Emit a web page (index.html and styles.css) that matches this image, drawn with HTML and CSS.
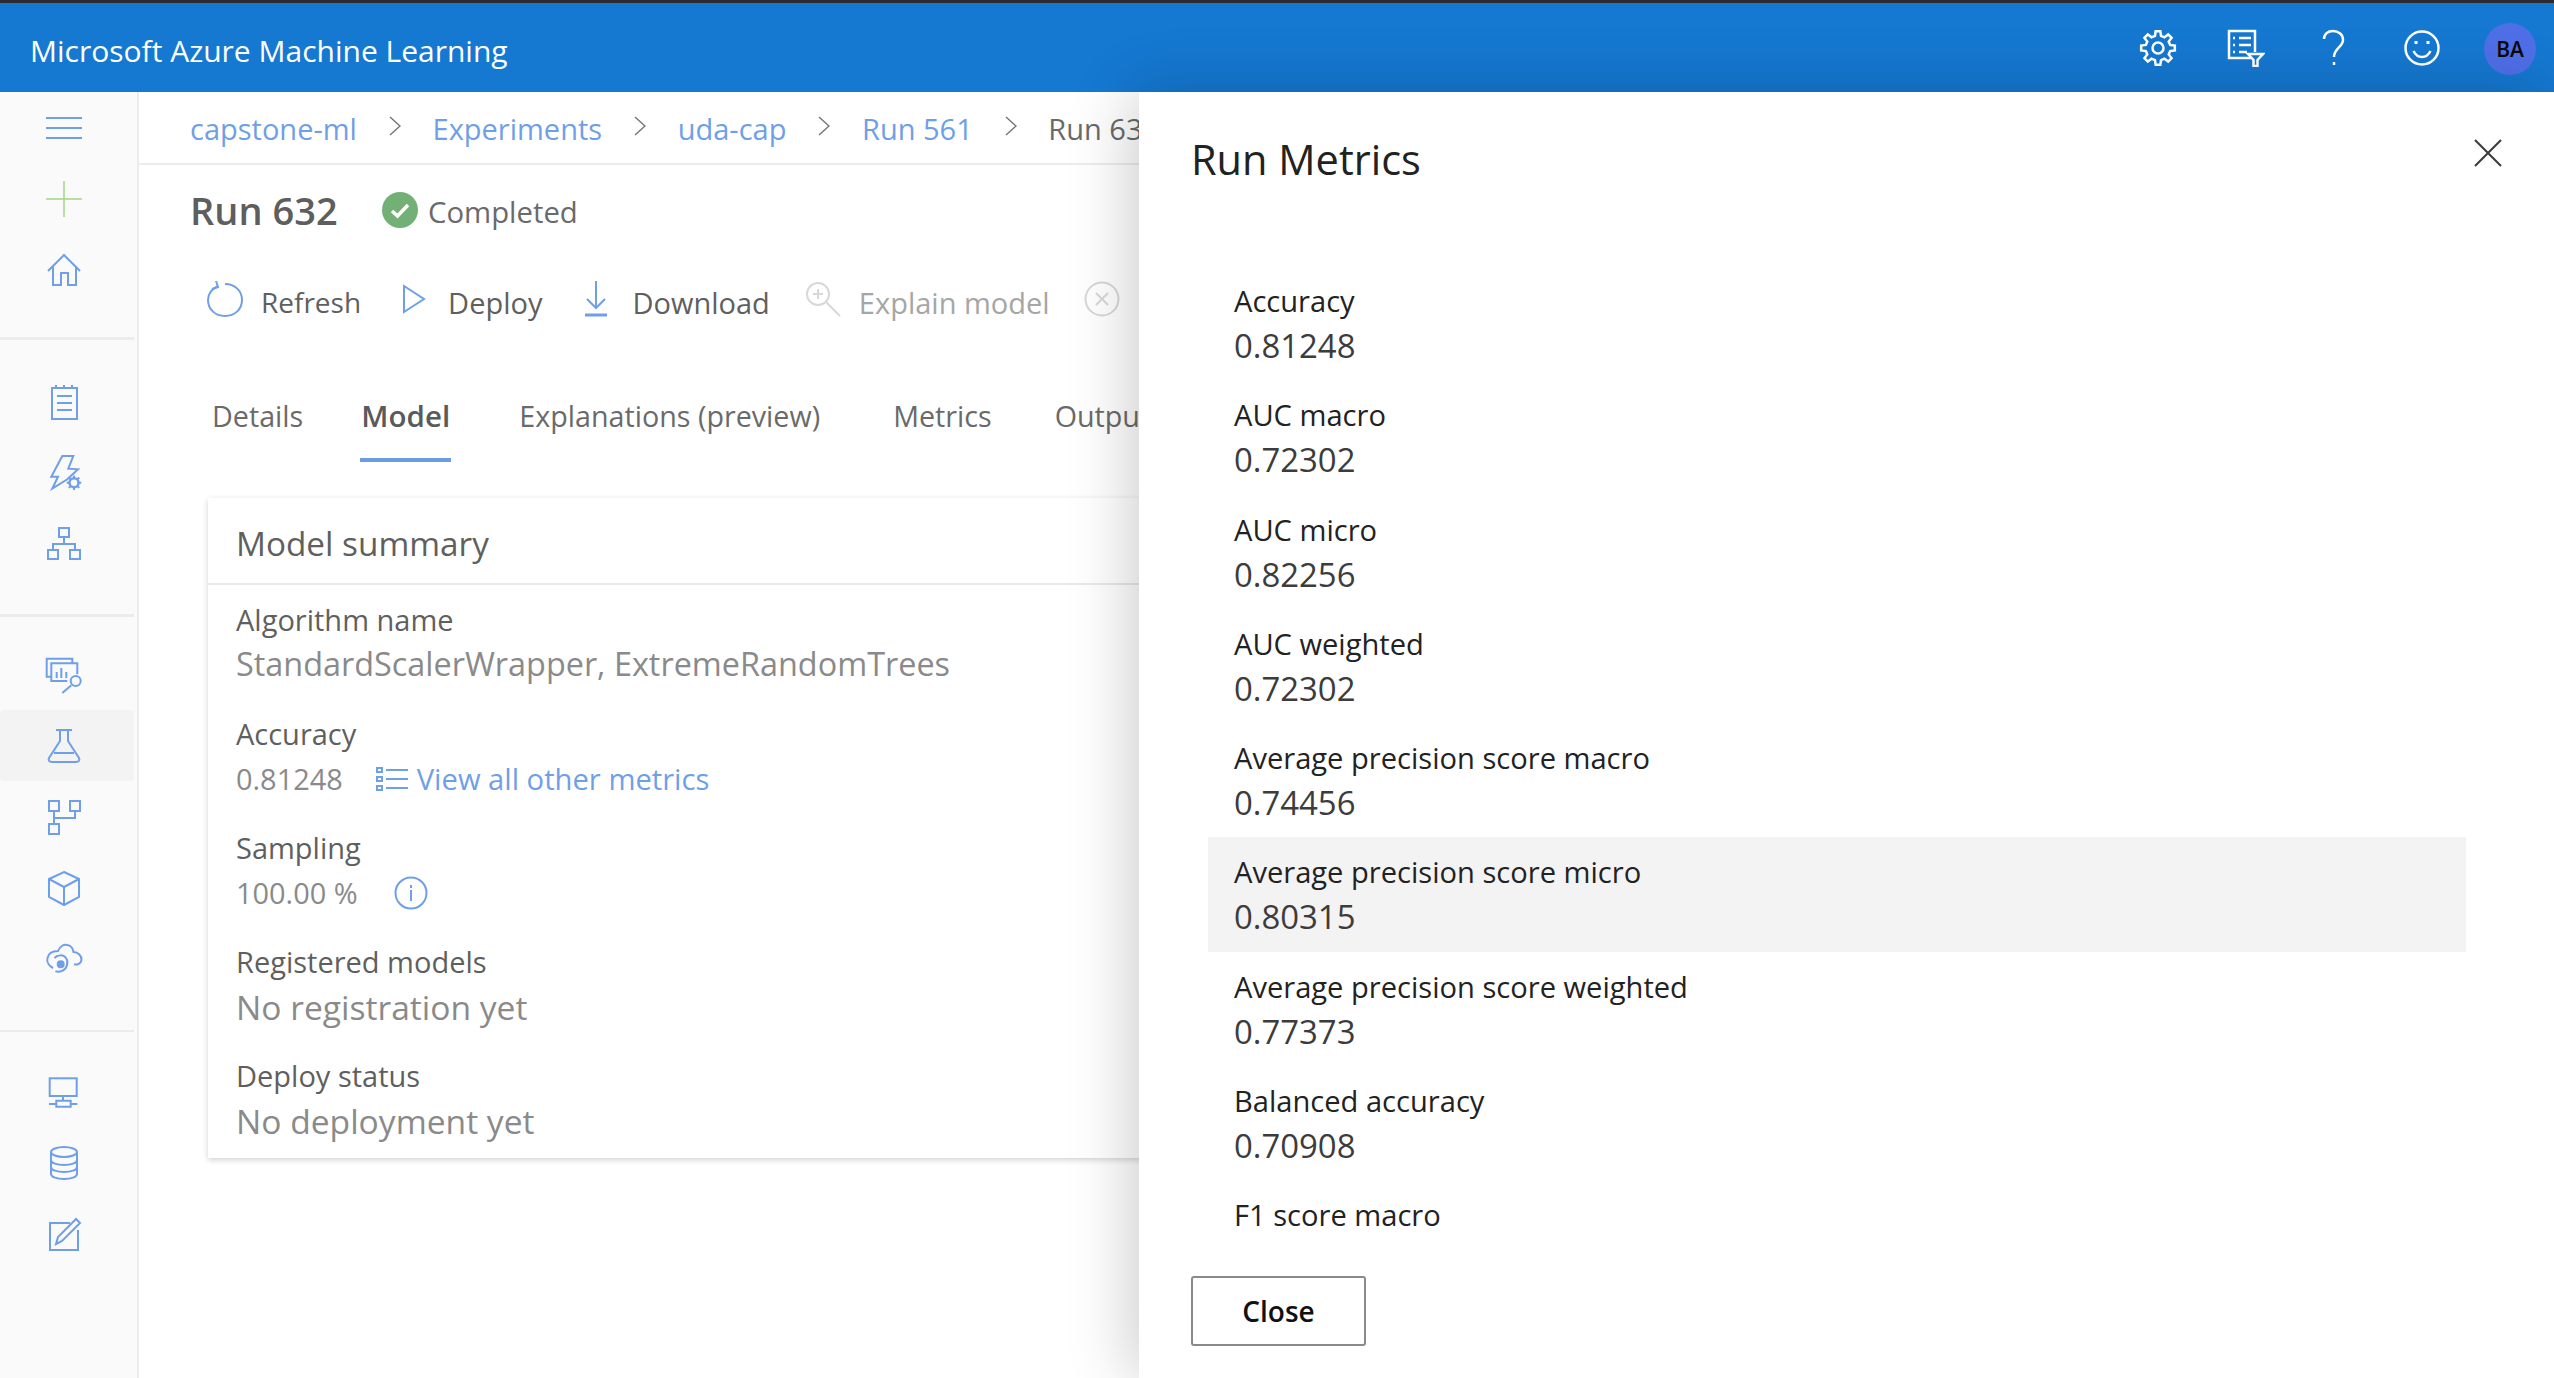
FILE: index.html
```html
<!DOCTYPE html>
<html lang="en">
<head>
<meta charset="utf-8">
<title>Run 632 - Microsoft Azure Machine Learning</title>
<link rel="stylesheet" href="styles.css">
</head>
<body>
<header class="topbar">
  <div class="brand">Microsoft Azure Machine Learning</div>
  <div class="top-actions">
    <span class="top-slot"><svg class="top-icon" width="38" height="38" viewBox="-19 -19 38 38"><polygon points="12.13,-3.02 16.83,-2.37 16.83,2.37 12.13,3.02 10.71,6.44 13.58,10.23 10.23,13.58 6.44,10.71 3.02,12.13 2.37,16.83 -2.37,16.83 -3.02,12.13 -6.44,10.71 -10.23,13.58 -13.58,10.23 -10.71,6.44 -12.13,3.02 -16.83,2.37 -16.83,-2.37 -12.13,-3.02 -10.71,-6.44 -13.58,-10.23 -10.23,-13.58 -6.44,-10.71 -3.02,-12.13 -2.37,-16.83 2.37,-16.83 3.02,-12.13 6.44,-10.71 10.23,-13.58 13.58,-10.23 10.71,-6.44"/><circle r="5.5"/></svg></span>
    <span class="top-slot"><svg class="top-icon" width="38" height="38" viewBox="0 0 38 38"><path d="M25 29H2V2h26v21"/><path d="M6 9h2M6 16h2M6 23h2M12 9h12M12 16h12M12 23h8"/><path d="M21 25h15l-5.500 6v6h-4v-6z"/></svg></span>
    <span class="top-slot"><svg class="top-icon" width="38" height="38" viewBox="0 0 38 38"><path d="M9 10c0-5 4-8 9-8s10 3 10 9c0 7-9 8-9 17"/><path d="M19 33v3"/></svg></span>
    <span class="top-slot"><svg class="top-icon" width="38" height="38" viewBox="0 0 38 38"><circle cx="19" cy="19" r="16.500"/><path d="M10.500 22c2 4 5 6 8.500 6s6.500-2 8.500-6"/><path d="M13 12v3M25 12v3" stroke-width="3"/></svg></span>
    <span class="top-slot"><span class="avatar">BA</span></span>
  </div>
</header>

<div class="shell">
  <nav class="sidebar">
    <div class="nav-group nav-group-first">
      <div class="nav-row"><svg class="nav-icon" viewBox="0 0 36 36"><path d="M0 8h36M0 18h36M0 28h36"/></svg></div>
      <div class="nav-row"><svg class="nav-icon nav-plus" viewBox="0 0 36 36"><path d="M0 18h36M18 0v36"/></svg></div>
      <div class="nav-row"><svg class="nav-icon" viewBox="0 0 36 36"><path d="M2 19 18 3l16 16"/><path d="M7 15v18h8V21h7v12h8V15"/></svg></div>
    </div>
    <div class="nav-group">
      <div class="nav-row"><svg class="nav-icon" viewBox="0 0 36 36"><rect x="6" y="4" width="25" height="31"/><path d="M10 1v3M18 1v3M26 1v3M11 12h15M11 19h15M11 26h15"/></svg></div>
      <div class="nav-row"><svg class="nav-icon" viewBox="0 0 36 36"><path d="M16.300 1h11l-5 12.700 9.700.6-10.700 10L6.300 33.700 12 21.700H5.300z"/><circle cx="28" cy="27.700" r="4.500" stroke-width="2.500"/><path d="M28 20.500v2.500M28 32.500v2.500M20.700 27.700h2.500M32.800 27.700h2.500M22.800 22.500l1.800 1.800M31.400 31.100l1.800 1.800M33.200 22.500l-1.800 1.800M24.600 31.100l-1.800 1.800"/></svg></div>
      <div class="nav-row"><svg class="nav-icon" viewBox="0 0 36 36"><rect x="13" y="2" width="10" height="9"/><rect x="2" y="24" width="10" height="9"/><rect x="24" y="24" width="10" height="9"/><path d="M18 11v7M7 24v-6h22v6"/></svg></div>
    </div>
    <div class="nav-group nav-group-wide">
      <div class="nav-row"><svg class="nav-icon" viewBox="0 0 36 36"><path d="M5.300 19.700H.7V1.700h25.600v4.600"/><path d="M21.300 24H5.300V6.300h26v11"/><path d="M10.700 21v-6M15.300 21V11M20.300 21v-6"/><circle cx="29.700" cy="24" r="5"/><path d="M25.300 28.300 16.300 36"/></svg></div>
      <div class="nav-row nav-row-active"><svg class="nav-icon" viewBox="0 0 36 36"><path d="M10 2h16M14 2v11L3 30c-1 2 0 4 3 4h24c3 0 4-2 3-4L22 13V2"/><path d="M8 25h20"/></svg></div>
      <div class="nav-row"><svg class="nav-icon" viewBox="0 0 36 36"><rect x="3" y="2" width="10" height="10"/><rect x="24" y="2" width="10" height="10"/><rect x="3" y="25" width="10" height="10"/><path d="M8 12v13M8 19h21v-7"/></svg></div>
      <div class="nav-row"><svg class="nav-icon" viewBox="0 0 36 36"><path d="M18 2 33 9v18l-15 8-15-8V9z"/><path d="M3 9l15 8 15-8M18 17v18"/></svg></div>
      <div class="nav-row"><svg class="nav-icon" viewBox="0 0 36 36"><path d="M7 27C3 25 .5 21 1.500 17 2.500 12 7 10 12 10 14 5 18 3 21 4c4 0 6 4 6.500 7 4.500 0 8.500 4 8 8-.5 3-3.500 5-7.500 4.500"/><path d="M8.500 17c2.500-3 8.500-4 11.500 0s1 11-4 13c-3 1-5 1-6.500 0"/><circle cx="14.700" cy="23.300" r="3" class="nav-dot"/></svg></div>
    </div>
    <div class="nav-group nav-group-last">
      <div class="nav-row"><svg class="nav-icon" viewBox="0 0 36 36"><rect x="3.700" y="4.300" width="27" height="17.700"/><path d="M17 22v4.700M10.300 26.700h14.400v6H10.300zM3 30h7.300M24.700 30h6.600"/></svg></div>
      <div class="nav-row"><svg class="nav-icon" viewBox="0 0 36 36"><ellipse cx="18" cy="7" rx="13" ry="5"/><path d="M5 7v22c0 3 6 5 13 5s13-2 13-5V7M5 15c0 3 6 5 13 5s13-2 13-5M5 22c0 3 6 5 13 5s13-2 13-5"/></svg></div>
      <div class="nav-row"><svg class="nav-icon" viewBox="0 0 36 36"><path d="M24 7H4v27h28V14"/><path d="M10 28l2-7L30 3l4 4-18 18z"/></svg></div>
    </div>
  </nav>

  <main class="main">
    <div class="crumbs">
      <a class="crumb-link">capstone-ml</a>
      <svg class="chev" viewBox="0 0 12 20"><path d="M1 1l10 9-10 9"/></svg>
      <a class="crumb-link">Experiments</a>
      <svg class="chev" viewBox="0 0 12 20"><path d="M1 1l10 9-10 9"/></svg>
      <a class="crumb-link">uda-cap</a>
      <svg class="chev" viewBox="0 0 12 20"><path d="M1 1l10 9-10 9"/></svg>
      <a class="crumb-link">Run 561</a>
      <svg class="chev" viewBox="0 0 12 20"><path d="M1 1l10 9-10 9"/></svg>
      <span class="crumb-current">Run 632</span>
    </div>

    <div class="run-head">
      <h1 class="run-title">Run 632</h1>
      <svg class="run-check" width="36" height="36" viewBox="0 0 36 36"><circle cx="18" cy="18" r="18"/><path d="M10 19l5.500 5L26 13"/></svg>
      <span class="run-status">Completed</span>
    </div>

    <div class="toolbar">
      <span class="tool tool-refresh"><svg class="tool-icon" width="36" height="36" viewBox="0 0 36 36"><path d="M11 5C5 8 1 12 1 19c0 9 7 16 17 16s17-7 17-16S28 3 18 3"/><path d="M9 0l2 6-6 2"/></svg>Refresh</span>
      <span class="tool tool-deploy"><svg class="tool-icon" width="24" height="30" viewBox="0 0 24 30"><path d="M2 2l20 13L2 28z"/></svg>Deploy</span>
      <span class="tool tool-download"><svg class="tool-icon" width="24" height="36" viewBox="0 0 24 36"><path d="M12 0v26M3 18l9 9 9-9"/><path d="M1 34h22" stroke-width="3"/></svg>Download</span>
      <span class="tool tool-off tool-explain"><svg class="tool-icon" width="36" height="36" viewBox="0 0 36 36"><circle cx="13" cy="13" r="11"/><path d="M21 21l14 14M13 8v10M8 13h10"/></svg>Explain model</span>
      <span class="tool tool-off"><svg class="tool-icon" width="36" height="36" viewBox="0 0 36 36"><circle cx="18" cy="18" r="16.500"/><path d="M12 12l12 12M24 12 12 24"/></svg></span>
    </div>

    <div class="tabs">
      <span class="tab tab-details">Details</span>
      <span class="tab tab-active">Model</span>
      <span class="tab tab-expl">Explanations (preview)</span>
      <span class="tab tab-metrics">Metrics</span>
      <span class="tab">Outputs</span>
    </div>

    <section class="card">
      <h2 class="card-head">Model summary</h2>
      <div class="card-body">
        <div class="field">
          <div class="field-label">Algorithm name</div>
          <div class="field-value field-algo">StandardScalerWrapper, ExtremeRandomTrees</div>
        </div>
        <div class="field">
          <div class="field-label">Accuracy</div>
          <div class="field-value field-inline">
            <span class="num">0.81248</span>
            <a class="metric-link"><svg width="32" height="24" viewBox="0 0 32 24"><path d="M10 3h22M10 12h22M10 21h22"/><rect x="1" y="1" width="5" height="4"/><rect x="1" y="10" width="5" height="4"/><rect x="1" y="19" width="5" height="4"/></svg>View all other metrics</a>
          </div>
        </div>
        <div class="field">
          <div class="field-label">Sampling</div>
          <div class="field-value field-inline">
            <span class="num">100.00 %</span>
            <svg class="info" width="34" height="34" viewBox="0 0 34 34"><circle cx="17" cy="17" r="15.500"/><path d="M17 14v11M17 9v3"/></svg>
          </div>
        </div>
        <div class="field">
          <div class="field-label">Registered models</div>
          <div class="field-value">No registration yet</div>
        </div>
        <div class="field">
          <div class="field-label">Deploy status</div>
          <div class="field-value">No deployment yet</div>
        </div>
      </div>
    </section>
  </main>
</div>

<aside class="panel">
  <div class="panel-head">
    <h2 class="panel-title">Run Metrics</h2>
    <svg class="panel-close" width="28" height="28" viewBox="0 0 28 28"><path d="M1 1l26 26M27 1 1 27"/></svg>
  </div>
  <div class="metrics">
    <div class="metric"><div class="metric-name">Accuracy</div><div class="metric-value">0.81248</div></div>
    <div class="metric"><div class="metric-name">AUC macro</div><div class="metric-value">0.72302</div></div>
    <div class="metric"><div class="metric-name">AUC micro</div><div class="metric-value">0.82256</div></div>
    <div class="metric"><div class="metric-name">AUC weighted</div><div class="metric-value">0.72302</div></div>
    <div class="metric"><div class="metric-name">Average precision score macro</div><div class="metric-value">0.74456</div></div>
    <div class="metric metric-hover"><div class="metric-name">Average precision score micro</div><div class="metric-value">0.80315</div></div>
    <div class="metric"><div class="metric-name">Average precision score weighted</div><div class="metric-value">0.77373</div></div>
    <div class="metric"><div class="metric-name">Balanced accuracy</div><div class="metric-value">0.70908</div></div>
    <div class="metric"><div class="metric-name">F1 score macro</div></div>
  </div>
  <div class="panel-foot">
    <button class="close-btn">Close</button>
  </div>
</aside>
</body>
</html>
```
FILE: styles.css
```css
* { box-sizing: border-box; }
html, body { margin: 0; height: 100%; }
body {
  width: 2554px;
  height: 1378px;
  overflow: hidden;
  position: relative;
  display: flex;
  flex-direction: column;
  background: #fff;
  font-family: "Open Sans", "Noto Sans", sans-serif;
  color: #5f5f5f;
}
h1, h2 { margin: 0; font-weight: 400; }

/* top bar */
.topbar {
  height: 92px;
  flex: none;
  border-top: 3px solid #2c2c30;
  background: #1578d1;
  display: flex;
  align-items: center;
  justify-content: space-between;
  padding-left: 30px;
}
.brand { color: #fff; font-size: 30px; font-weight: 500; padding-top: 6px; }
.top-actions { display: flex; align-items: center; }
.top-slot { width: 88px; display: flex; justify-content: center; align-items: center; }
.top-icon { fill: none; stroke: #fff; stroke-width: 2.500; }
.avatar {
  width: 52px; height: 52px; border-radius: 50%;
  background: #4f6fe8; color: #0a0a0a;
  font-size: 21px; font-weight: 600;
  display: flex; align-items: center; justify-content: center;
  margin-top: 3px;
}

.shell { flex: 1; display: flex; min-height: 0; }

/* sidebar */
.sidebar {
  width: 139px; flex: none;
  background: #fafafa;
  border-right: 2px solid #ececec;
}
.nav-group { padding: 0 0 35px; margin-bottom: 26px; position: relative; border-bottom: 3px solid #ececec; width: 134px; }
.nav-group-first { padding-bottom: 32px; }
.nav-group-wide { margin-top: -4px; padding-bottom: 36px; margin-bottom: 24px; border-bottom-width: 2px; }
.nav-group-last { border-bottom: 0; }
.nav-row { height: 71px; width: 134px; padding-right: 6px; display: flex; align-items: center; justify-content: center; border-radius: 4px; }
.nav-row-active { background: #f3f3f3; }
.nav-icon { width: 36px; height: 36px; fill: none; stroke: #6f9fe8; stroke-width: 2; overflow: visible; }
.nav-plus { stroke: #a3d586; stroke-width: 1.500; }
.nav-dot { fill: #6f9fe8; }

/* main */
.main { flex: 1; min-width: 0; white-space: nowrap; overflow: hidden; }
.crumbs {
  height: 73px;
  border-bottom: 2px solid #ececec;
  padding: 1px 0 0 51px;
  display: flex; align-items: center; gap: 31.800px;
  font-size: 29px;
}
.crumb-link { color: #6f9fe8; }
.crumb-current { color: #6a6a6a; }
.chev { width: 12px; height: 20px; fill: none; stroke: #777; stroke-width: 1.500; flex: none; margin-top: -4px; }

.run-head { height: 96px; padding: 0 0 6px 51px; display: flex; align-items: center; }
.run-title { font-size: 38px; font-weight: 600; color: #5e5e5e; width: 192px; }
.run-check { flex: none; margin-right: 10px; }
.run-check circle { fill: #72b076; }
.run-check path { fill: none; stroke: #fff; stroke-width: 3.500; }
.run-status { font-size: 29.300px; color: #6a6a6a; margin-top: 3px; }

.toolbar { height: 86px; padding-left: 68px; display: flex; align-items: center; margin-top: -2px; font-size: 29px; color: #5f5f5f; }
.tool { display: flex; align-items: center; }
.tool-icon { fill: none; stroke: #6f9fe8; stroke-width: 2; flex: none; margin-top: -6px; }
.tool-refresh { margin-right: 41px; font-size: 28px; }
.tool-refresh .tool-icon { margin-right: 18px; }
.tool-deploy { margin-right: 42px; }
.tool-deploy .tool-icon { margin-right: 22px; }
.tool-download { margin-right: 35px; }
.tool-download .tool-icon { margin-right: 24px; }
.tool-explain { margin-right: 34px; }
.tool-explain .tool-icon { margin-right: 18px; }
.tool-off { color: #a6a6a6; }
.tool-off .tool-icon { stroke: #d8d8d8; }

.tabs { height: 153px; padding: 43px 0 0 73px; display: flex; font-size: 28.700px; color: #6a6a6a; }
.tab { height: 88px; line-height: 56px; }
.tab-details { margin-right: 57px; }
.tab-active {
  font-weight: 600; color: #5a5a5a; font-size: 29.500px;
  width: 91px; text-align: center;
  margin-right: 68px;
  border-bottom: 4px solid #6b9ce8;
  height: 74px;
}
.tab-expl { margin-right: 73px; }
.tab-metrics { margin-right: 63px; }

.card {
  margin: 0 0 0 69px;
  width: 1500px;
  height: 660px;
  background: #fff;
  box-shadow: 0 2px 6px rgba(0,0,0,.18);
}
.card-head { height: 87px; border-bottom: 2px solid #e8e8e8; padding-left: 28px; font-size: 33.300px; line-height: 90px; color: #5f5f5f; }
.card-body { padding: 13px 0 0 28px; }
.field { height: 114px; }
.field-label { font-size: 29px; line-height: 44px; color: #5f5f5f; }
.field-value { font-size: 33.600px; line-height: 46px; color: #8a8a8a; }
.field-algo { font-size: 32.400px; line-height: 42px; }
.field-inline { display: flex; align-items: center; font-size: 28.900px; }
.num { color: #8a8a8a; }
.metric-link { color: #6f9fe8; margin-left: 33px; font-size: 29.200px; display: flex; align-items: center; gap: 9px; }
.metric-link svg { fill: none; stroke: #6f9fe8; stroke-width: 2; }
.info { fill: none; stroke: #6f9fe8; stroke-width: 2; margin-left: 36px; }

/* panel */
.panel {
  position: absolute;
  left: 1139px; top: 92px; right: 0; bottom: 0;
  background: #fff;
  box-shadow: -8px 0 60px rgba(0,0,0,.2);
  display: flex; flex-direction: column;
}
.panel-head { height: 174px; flex: none; padding: 40px 52px 0 52px; display: flex; justify-content: space-between; align-items: flex-start; }
.panel-title { font-size: 41.500px; line-height: 54px; color: #222; }
.panel-close { fill: none; stroke: #3a3a3a; stroke-width: 2; margin-top: 7px; }
.metrics { flex: 1; min-height: 0; overflow: hidden; margin: 0 88px 0 69px; }
.metric { height: 114.250px; padding: 13px 0 0 26px; }
.metric-hover { background: #f3f3f3; }
.metric-name { font-size: 29.100px; line-height: 44px; color: #222; }
.metric-value { font-size: 32.900px; line-height: 46px; color: #3c3c3c; }
.panel-foot { height: 133px; flex: none; padding: 31px 0 0 52px; }
.close-btn {
  width: 175px; height: 70px;
  background: #fff; border: 2px solid #8a8a8a; border-radius: 3px;
  font: 600 28px "Open Sans", "Noto Sans", sans-serif;
  color: #111;
}
```
